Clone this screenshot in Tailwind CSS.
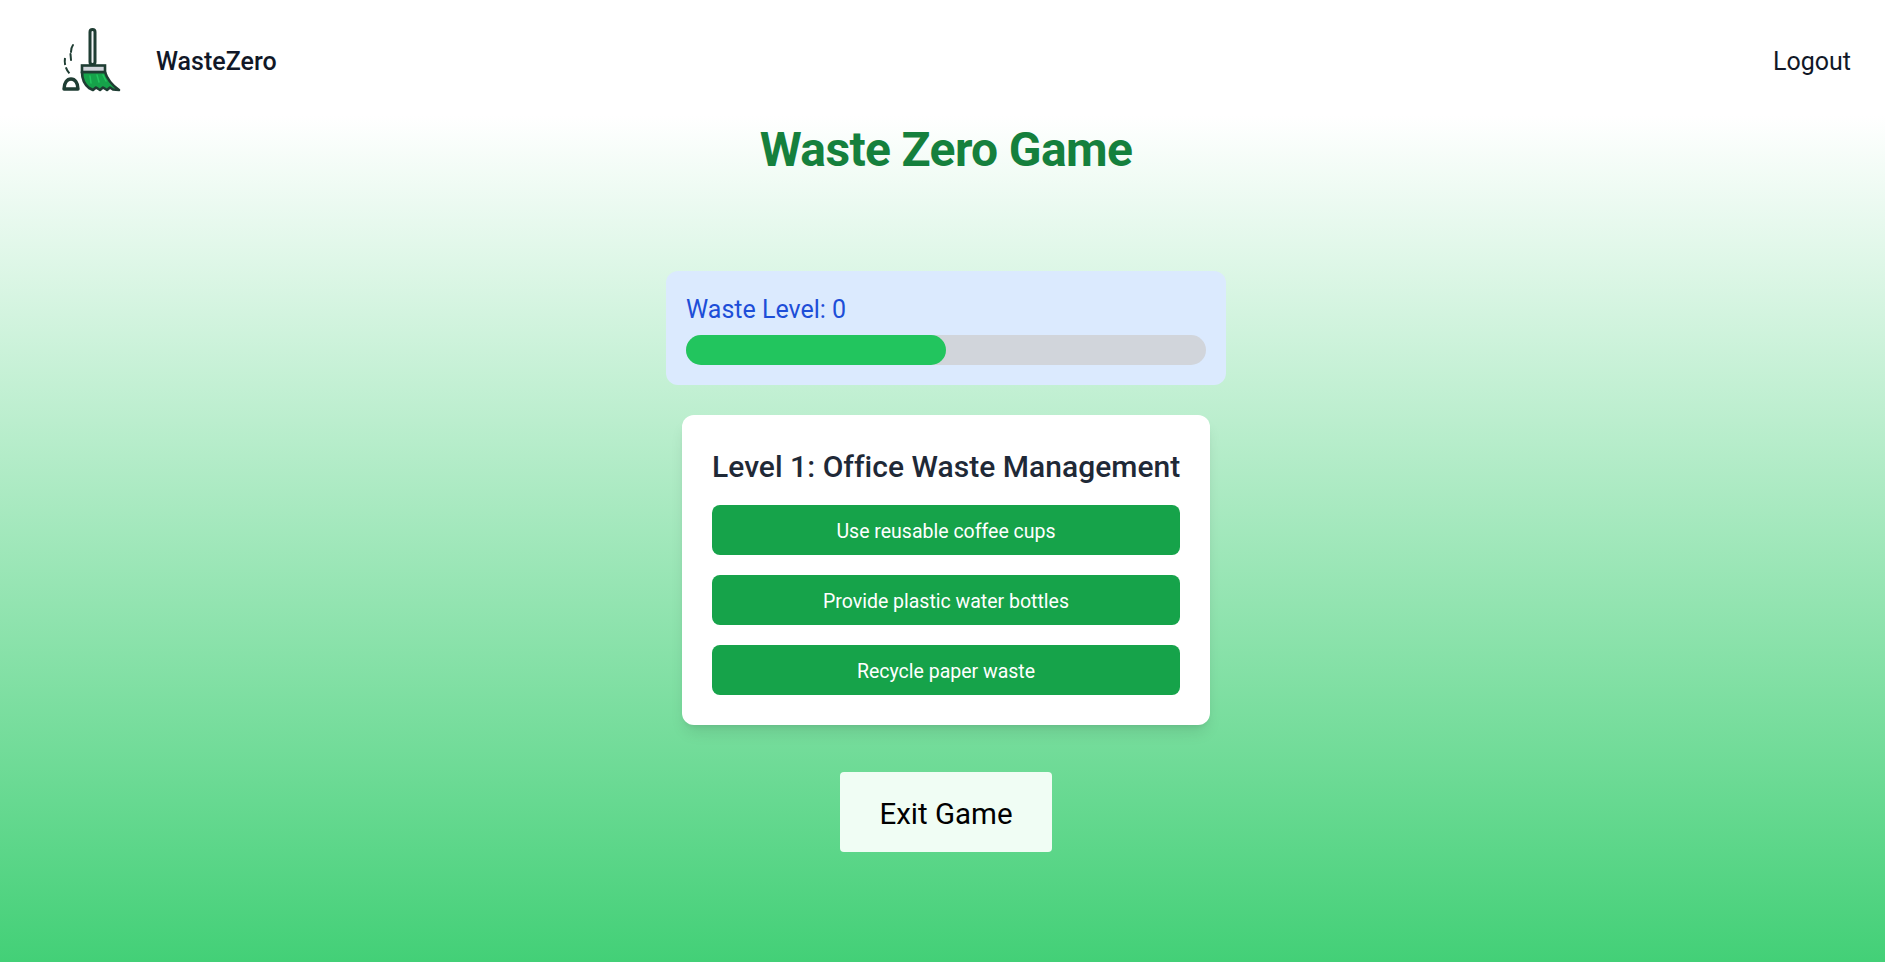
<!DOCTYPE html>
<html>
<head>
<meta charset="utf-8">
<title>Waste Zero Game</title>
<script src="https://cdn.jsdelivr.net/npm/@tailwindcss/browser@4"></script>
</head>
<body class="font-['Roboto',sans-serif] text-[#111827]">
<div class="h-[962px] overflow-hidden bg-[linear-gradient(to_bottom,#ffffff_12%,#43d077_100%)]">
	<header class="flex items-center justify-between h-[122px] pl-[55px] pr-[34px]">
		<div class="flex items-center">
			<!-- broom logo -->
			<svg class="w-[72px] h-[72px]" viewBox="0 3 72 72" fill="none">
				<rect x="35" y="7.500" width="5" height="35" rx="2.500" fill="#f3f4f6" stroke="#1f3d33" stroke-width="3"/>
				<path d="M27 50H50C52 57 57 63 64 68L58 67.500 55 65.500 52 68 48 65.500 45 68 41 65.500 38 68 34 66C29 62 27 56 27 50z" fill="#16a34a" stroke="#1f3d33" stroke-width="2.600" stroke-linejoin="round"/>
				<path d="M35 54l1 7M42 53l2 7M48 53l3 6" stroke="#22c55e" stroke-width="1.500" stroke-linecap="round"/>
				<rect x="27" y="43.500" width="23" height="6.500" fill="#d1d5db" stroke="#1f3d33" stroke-width="2.600"/>
				<path d="M9 67c0-6 3-10 7-10s7 4 7 10z" fill="#fff" stroke="#1f3d33" stroke-width="3.400" stroke-linejoin="round"/>
				<path d="M18 23c-1.500 2-2 4-2 7M15.500 32l.500 6" stroke="#1f3d33" stroke-width="2" stroke-linecap="round"/>
				<path d="M10 36c-1 6 1 12 5 16" stroke="#1f3d33" stroke-width="2" stroke-dasharray="7 2.500"/>
			</svg>
			<span class="ml-[29px] pt-[2px] text-[25px] font-medium">WasteZero</span>
		</div>
		<a class="pt-[2px] text-[25px]">Logout</a>
	</header>
	<main class="flex flex-col items-center pl-[7px]">
		<h1 class="mt-[4px] text-5xl font-bold tracking-[-0.64px] text-[#15803d]">Waste Zero Game</h1>
		<section class="mt-[97px] w-[560px] rounded-xl bg-[#dbeafe] p-5">
			<p class="pt-[3px] mb-[9px] text-[25px] leading-8 text-[#1d4ed8]">Waste Level: 0</p>
			<div class="h-[30px] rounded-full bg-[#d1d5db]">
				<div class="h-full w-1/2 rounded-full bg-[#22c55e]"></div>
			</div>
		</section>
		<section class="mt-[30px] w-[528px] rounded-xl bg-white p-[30px] shadow-lg">
			<h2 class="text-[30px] font-medium tracking-[0.03px] text-[#1f2937] mb-4 leading-[44px] whitespace-nowrap">Level 1: Office Waste Management</h2>
			<div class="flex flex-col gap-5">
				<button class="h-[50px] pt-[4px] rounded-lg bg-[#16a34a] text-[19.500px] text-white">Use reusable coffee cups</button>
				<button class="h-[50px] pt-[4px] rounded-lg bg-[#16a34a] text-[19.500px] text-white">Provide plastic water bottles</button>
				<button class="h-[50px] pt-[4px] rounded-lg bg-[#16a34a] text-[19.500px] text-white">Recycle paper waste</button>
			</div>
		</section>
		<button class="mt-[47px] w-[212px] h-[80px] pt-[4px] rounded bg-[#f0fdf4] text-[29.500px] text-black">Exit Game</button>
	</main>
</div>
</body>
</html>
